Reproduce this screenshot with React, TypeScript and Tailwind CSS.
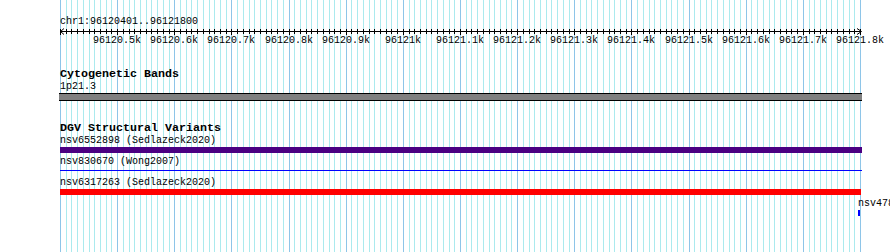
const START = 96120400;
const PX = 4 / 7; // pixels per bp
const LEFT = 60;

const xOf = (bp: number) => Math.round(LEFT + (bp - START) * PX);

const lines = Array.from({ length: 141 }, (_, i) => ({ x: xOf(START + i * 10), major: i % 10 === 0 }));

const labels = Array.from({ length: 14 }, (_, i) => {
  const bp = 96120500 + i * 100;
  const k = bp / 1000;
  const text = Number.isInteger(k) ? `${k}k` : `${k.toFixed(1)}k`;
  return { x: xOf(bp), text };
});

function Grid() {
  return (
    <svg className="absolute inset-0" width={890} height={252}>
      {lines.map((l, i) => (
        <line
          key={i}
          x1={l.x + 0.5}
          x2={l.x + 0.5}
          y1={0}
          y2={252}
          stroke={l.major ? '#8ec5e8' : '#abeaee'}
          strokeWidth={1}
        />
      ))}
    </svg>
  );
}

function Ruler() {
  return (
    <svg width={890} height={18} className="block" style={{ fontFamily: '"Liberation Mono", monospace' }}>
      <line x1={60} x2={861} y1={3.5} y2={3.5} stroke="#000" />
      <polyline points="64,0.5 60.5,3.5 64,6.5" fill="none" stroke="#000" />
      <polyline points="857,0.5 861.5,3.5 857,6.5" fill="none" stroke="#000" />
      {lines.map((l, i) => (
        <line key={i} x1={l.x + 0.5} x2={l.x + 0.5} y1={1} y2={l.major ? 7 : 6} stroke="#000" />
      ))}
      {labels.map((l) => (
        <text key={l.text} x={l.x} y={15} fontSize={10} textAnchor="middle" fill="#000">
          {l.text}
        </text>
      ))}
    </svg>
  );
}

export default function App() {
  return (
    <div className="relative w-[890px] h-[252px] overflow-hidden bg-white">
      <Grid />
      <div className="relative font-['Liberation_Mono',monospace] text-black">
        <div className="pt-[16px] pl-[60px] text-[10px] leading-[12px] whitespace-nowrap">chr1:96120401..96121800</div>
        <Ruler />

        <div className="mt-[22px] pl-[60px] text-[11.667px] leading-[13px] font-bold whitespace-nowrap">Cytogenetic Bands</div>
        <div className="pl-[60px] text-[10px] leading-[12px] whitespace-nowrap">1p21.3</div>
        <div className="ml-[59px] w-[803px] h-[8px] bg-[#808080] border-y border-black" />

        <div className="mt-[21px] pl-[60px] text-[11.667px] leading-[13px] font-bold whitespace-nowrap">DGV Structural Variants</div>
        <div className="pl-[60px] text-[10px] leading-[12px] whitespace-nowrap">nsv6552898 (Sedlazeck2020)</div>
        <div className="ml-[60px] w-[802px] h-[6px] bg-[#4b0082]" />
        <div className="mt-[3px] pl-[60px] text-[10px] leading-[12px] whitespace-nowrap">nsv830670 (Wong2007)</div>
        <div className="mt-[2px] ml-[60px] w-[802px] h-[1px] bg-[#0000ff]" />
        <div className="mt-[6px] pl-[60px] text-[10px] leading-[12px] whitespace-nowrap">nsv6317263 (Sedlazeck2020)</div>
        <div className="ml-[60px] w-[801px] h-[6px] bg-[#ff0000]" />
        <div className="mt-[3px] pl-[858px] text-[10px] leading-[12px] whitespace-nowrap">nsv4780143 (Sudmant2015)</div>
        <div className="ml-[858px] w-[2px] h-[6px] bg-[#0000ff]" />
      </div>
    </div>
  );
}
